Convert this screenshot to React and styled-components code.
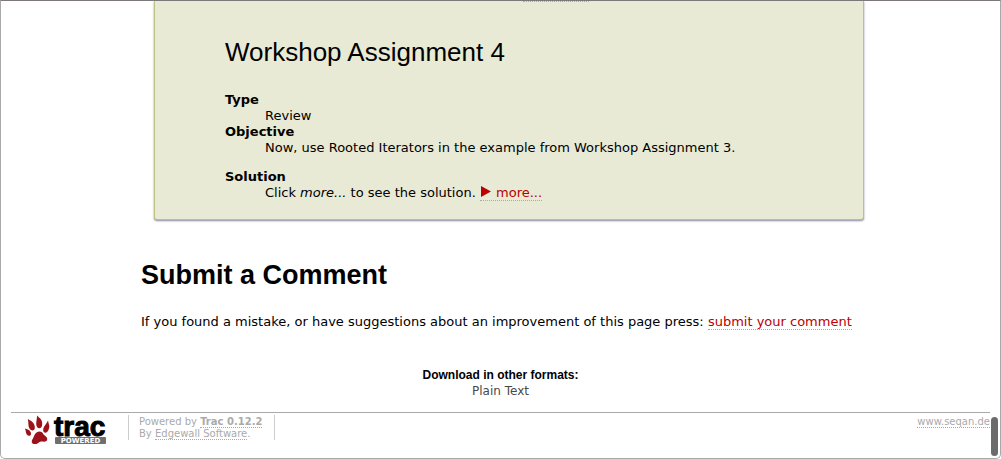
import React from "react";
import styled, { createGlobalStyle } from "styled-components";

const Global = createGlobalStyle`
  * { box-sizing: border-box; }
  html, body, #root { height: 100%; }
  body {
    margin: 0;
    background: #fff;
    color: #000;
    font: 13px/16px Verdana, "DejaVu Sans", sans-serif;
  }
`;

const Frame = styled.div`
  position: relative;
  display: flex;
  flex-direction: column;
  min-height: 100%;
  border: 1px solid #a9a9a9;
  border-top-color: #7c777b;
  border-radius: 0 0 5px 5px;
  padding: 0 10px;
`;

const Content = styled.main`
  padding: 0 113px 0 130px;
`;

const Panel = styled.section`
  margin: 0 13px;
  padding: 36px 70px 18px;
  background: #e8ead5;
  border: 1px solid #bfc183;
  border-top: 0;
  border-radius: 0 0 3px 3px;
  box-shadow: 0 1px 2px #8888a0;
`;

const CutLink = styled.a`
  position: absolute;
  top: 0;
  left: 522px;
  width: 66px;
  border-top: 1px dotted #aaa;
`;

const PanelTitle = styled.h2`
  margin: 0 0 24px;
  font: 26px/31px Arial, "Liberation Sans", sans-serif;
`;

const Terms = styled.dl`
  margin: 0;
`;

const Term = styled.dt`
  font-weight: bold;
`;

const Detail = styled.dd`
  margin: 0 0 ${(p) => (p.$spaced ? 13 : 0)}px 40px;
`;

const Link = styled.a`
  color: ${(p) => p.$color || "#b00"};
  text-decoration: none;
  border-bottom: 1px dotted #aaa;
`;

const Triangle = styled.svg`
  width: 10px;
  height: 11px;
  margin: 0 1px;
`;

const Title = styled.h1`
  margin: 39px 0 22px;
  font: bold 27px/33px Arial, "Liberation Sans", sans-serif;
`;

const Text = styled.p`
  margin: 0;
`;

const Formats = styled.section`
  margin-top: 37px;
  text-align: center;
  font-size: 12px;
`;

const FormatsTitle = styled.h3`
  margin: 0;
  font: bold 12px/16px Arial, "Liberation Sans", sans-serif;
`;

const PlainLink = styled.a`
  color: #494949;
  text-decoration: none;
`;

const Footer = styled.footer`
  display: flex;
  align-items: flex-start;
  margin-top: 13px;
  padding-top: 2px;
  border-top: 1px solid #aaa;
  color: #aaa;
  font-size: 10px;
  line-height: 12px;
`;

const LogoLink = styled.a`
  display: block;
  margin: 0 20px 0 13px;
  height: 30px;
`;

const Powered = styled.p`
  margin: 0;
  padding: 1px 12px 0 10px;
  border: solid #ccc;
  border-width: 0 1px;
`;

const Site = styled.p`
  margin: 0 0 0 auto;
  padding-top: 1px;
`;

const Scrollbar = styled.div`
  position: absolute;
  right: 2px;
  bottom: 2px;
  width: 7px;
  height: 39px;
  border-radius: 4px;
  background: #6b6b6b;
`;

function TracLogo() {
  return (
    <svg width="84" height="30" viewBox="0 0 84 30" overflow="visible" role="img" aria-label="Trac Powered">
      <g fill="#9d1219">
        <path d="M1 13.5L3.2 14.3C5.6 15 7.4 17.3 7 19.3C6.5 21.3 4 21.3 2.8 19.6C1.7 18 2 16.2 1 13.5Z" />
        <path d="M3.8 4L6.2 5.4C9.3 6.8 11.3 10.4 10.8 13.2C10.3 16 7.3 16.2 5.6 13.8C3.9 11.3 4.8 8 3.8 4Z" />
        <path d="M13 0.5L15 2.6C17.9 4.5 18.9 8.4 17.9 11.3C16.9 14 13.9 13.9 12.7 11.2C11.5 8.1 13.1 4.9 13 0.5Z" />
        <path d="M24 5.5L24.6 8.3C26 11 25.3 14.9 23.2 17C21.2 18.7 19 17.4 19.2 14.8C19.3 11.7 22 9.5 24 5.5Z" />
        <path d="M9 28.7C7.2 28 7.6 25.4 8.8 23.8C10 22 10 19.4 12.5 17.5C14.9 15.8 18 16.1 19 18.6C19.7 20.5 21.8 20.8 22.8 22.6C24 25 22.5 27 20 26.7C17.8 26.4 16.2 26.4 14.2 27.9C12.6 29.1 10.6 29.4 9 28.7Z" />
      </g>
      <text x="30" y="21" fontFamily="Liberation Sans, sans-serif" fontWeight="bold" fontSize="28" stroke="#000" strokeWidth="1">trac</text>
      <rect x="31" y="22" width="51" height="7" rx="1" fill="#6f6f6f" />
      <text x="56.5" y="28" textAnchor="middle" fill="#fff" fontFamily="DejaVu Sans, sans-serif" fontSize="7" fontWeight="bold">POWERED</text>
    </svg>
  );
}

export default function App() {
  return (
    <>
      <Global />
      <Frame>
        <CutLink href="#iterators" aria-label="more" />
        <Content>
          <Panel>
            <PanelTitle>Workshop Assignment 4</PanelTitle>
            <Terms>
              <Term>Type</Term>
              <Detail>Review</Detail>
              <Term>Objective</Term>
              <Detail $spaced>Now, use Rooted Iterators in the example from Workshop Assignment 3.</Detail>
              <Term>Solution</Term>
              <Detail>
                Click <em>more...</em> to see the solution.{" "}
                <Link href="#solution">
                  <Triangle viewBox="0 0 10 11" aria-hidden="true">
                    <path d="M0 0L10 5.5L0 11Z" fill="#b00" />
                  </Triangle>{" "}
                  more...
                </Link>
              </Detail>
            </Terms>
          </Panel>
          <Title>Submit a Comment</Title>
          <Text>
            If you found a mistake, or have suggestions about an improvement of this page press:{" "}
            <Link href="#comment">submit your comment</Link>
          </Text>
        </Content>
        <Formats>
          <FormatsTitle>Download in other formats:</FormatsTitle>
          <PlainLink href="#text">Plain Text</PlainLink>
        </Formats>
        <Footer>
          <LogoLink href="#trac"><TracLogo /></LogoLink>
          <Powered>
            Powered by <Link $color="#aaa" href="#about"><strong>Trac 0.12.2</strong></Link>
            <br />
            By <Link $color="#aaa" href="#edgewall">Edgewall Software</Link>.
          </Powered>
          <Site><Link $color="#aaa" href="#seqan">www.seqan.de</Link></Site>
        </Footer>
        <Scrollbar />
      </Frame>
    </>
  );
}
